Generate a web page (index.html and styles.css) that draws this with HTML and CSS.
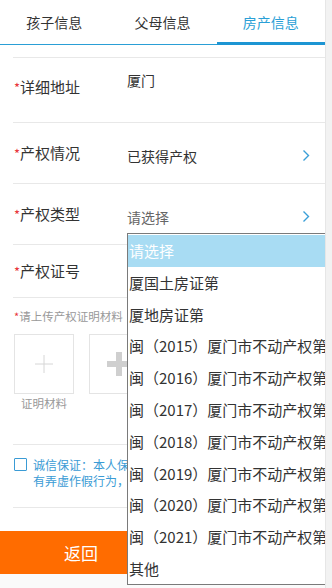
FILE: index.html
```html
<!DOCTYPE html>
<html lang="zh-CN">

<head>
    <meta charset="UTF-8">
    <meta name="viewport" content="width=device-width, initial-scale=1.0">
    <title>房产信息</title>
    <link rel="stylesheet" href="styles.css">
</head>

<body>
    <div class="page">
        <div class="tabs">
            <div class="tab">孩子信息</div>
            <div class="tab">父母信息</div>
            <div class="tab active">房产信息</div>
        </div>

        <div class="form">
            <div class="row tall">
                <div class="label"><span class="req">*</span>详细地址</div>
                <div class="value">厦门</div>
            </div>
            <div class="row">
                <div class="label"><span class="req">*</span>产权情况</div>
                <div class="value">已获得产权</div>
                <svg class="arrow" width="8" height="13" viewBox="0 0 8 13"><polyline points="1.5,1.5 6.5,6.5 1.5,11.5" fill="none" stroke="#3a9fd8" stroke-width="1.4"/></svg>
            </div>
            <div class="row">
                <div class="label"><span class="req">*</span>产权类型</div>
                <div class="value placeholder">请选择</div>
                <svg class="arrow" width="8" height="13" viewBox="0 0 8 13"><polyline points="1.5,1.5 6.5,6.5 1.5,11.5" fill="none" stroke="#3a9fd8" stroke-width="1.4"/></svg>
            </div>
            <div class="row short">
                <div class="label"><span class="req">*</span>产权证号</div>
                <div class="value placeholder"></div>
            </div>

            <div class="upload">
                <div class="hint"><span class="req">*</span>请上传产权证明材料</div>
                <div class="files">
                    <div class="file">
                        <div class="box">
                            <svg width="20" height="20" viewBox="0 0 20 20"><path d="M10 1v18M1 10h18" stroke="#d6d6d6" stroke-width="1"/></svg>
                        </div>
                        <div class="caption">证明材料</div>
                    </div>
                    <div class="file">
                        <div class="box">
                            <svg width="26" height="26" viewBox="0 0 26 26"><path d="M13 1v24M1 13h24" stroke="#cfcfcf" stroke-width="6"/></svg>
                        </div>
                    </div>
                </div>
            </div>

            <div class="promise">
                <span class="check"></span>
                <p>诚信保证：本人保证所填写的以上信息真实准确，如有弄虚作假行为，自愿承担相应责任。</p>
            </div>

            <div class="row code">
                <div class="label">短信验证码</div>
                <div class="value placeholder">请输入</div>
            </div>
        </div>

        <div class="footer">
            <button class="btn back">返回</button>
        </div>

        <ul class="dropdown">
            <li class="selected">请选择</li>
            <li>厦国土房证第</li>
            <li>厦地房证第</li>
            <li>闽（2015）厦门市不动产权第</li>
            <li>闽（2016）厦门市不动产权第</li>
            <li>闽（2017）厦门市不动产权第</li>
            <li>闽（2018）厦门市不动产权第</li>
            <li>闽（2019）厦门市不动产权第</li>
            <li>闽（2020）厦门市不动产权第</li>
            <li>闽（2021）厦门市不动产权第</li>
            <li>其他</li>
        </ul>
    </div>
</body>

</html>
```

FILE: styles.css
```css
body {
    margin: 0;
    background-color: #f2f2f2;
    font-family: "Noto Sans CJK SC", "Microsoft YaHei", sans-serif;
    color: #333;
}

.page {
    position: relative;
    width: 325px;
    height: 588px;
    background-color: #fff;
    border-right: 1px solid #e6e6e6;
    overflow: hidden;
}

.tabs {
    display: flex;
    align-items: flex-start;
    height: 45px;
}

.tab {
    flex: 1;
    height: 44px;
    line-height: 44px;
    text-align: center;
    font-size: 14px;
    border-bottom: 1px solid #2a9fd6;
}

.tab.active {
    height: 42px;
    line-height: 44px;
    color: #2a9fd6;
    border-bottom: 3px solid #1d95d3;
}

.form {
    margin: 12px 0 0 13px;
    border-top: 1px solid #e8e8e8;
}

.row {
    display: flex;
    align-items: center;
    height: 60px;
    padding-left: 1px;
    border-bottom: 1px solid #e8e8e8;
}

.row.tall {
    height: 64px;
    align-items: flex-start;
}

.row.tall .label {
    margin-top: 19px;
}

.row.tall .value {
    margin-top: 12px;
    padding-top: 0;
}

.row.short {
    height: 52px;
}

.row.code .label {
    width: 86px;
}

.label {
    width: 113px;
    font-size: 15px;
    line-height: 20px;
}

.req {
    color: #e8343a;
    font-size: 13px;
}

.value {
    flex: 1;
    font-size: 14px;
    line-height: 20px;
    padding-top: 5px;
}

.placeholder {
    color: #666;
}

.arrow {
    margin: 5px 15px 0 0;
}

.upload {
    padding: 10px 0 33px 1px;
    border-bottom: 1px solid #e8e8e8;
}

.hint {
    font-size: 11.5px;
    line-height: 16px;
    color: #999;
}

.hint .req {
    font-size: 11px;
}

.files {
    display: flex;
    gap: 15px;
    margin-top: 10px;
}

.file {
    width: 60px;
}

.box {
    display: flex;
    align-items: center;
    justify-content: center;
    width: 58px;
    height: 58px;
    border: 1px solid #e4e4e4;
}

.caption {
    margin-top: 1px;
    font-size: 11.5px;
    line-height: 16px;
    color: #999;
    text-align: center;
}

.promise {
    display: flex;
    align-items: flex-start;
    padding: 12px 10px 18px 1px;
    border-bottom: 1px solid #e8e8e8;
}

.check {
    flex: none;
    width: 11px;
    height: 11px;
    margin: 1px 6px 0 0;
    border: 1.5px solid #3a9bd5;
    border-radius: 1px;
}

.promise p {
    margin: 0;
    font-size: 12px;
    line-height: 16px;
    color: #3a9bd5;
}

.footer {
    position: absolute;
    left: 0;
    bottom: 0;
    width: 325px;
    height: 57px;
    background-color: #fafafa;
}

.btn {
    width: 162px;
    height: 43px;
    border: none;
    color: #fff;
    font-family: inherit;
    font-size: 17px;
}

.back {
    background-color: #ff6c00;
}

.dropdown {
    position: absolute;
    left: 127px;
    top: 233px;
    width: 202px;
    height: 349px;
    margin: 0;
    padding: 1px 0 0;
    list-style: none;
    background-color: #fff;
    border: 1px solid #7a7a7a;
    overflow: hidden;
    box-sizing: content-box;
}

.dropdown li {
    height: 31.8px;
    line-height: 31.8px;
    padding-left: 1px;
    font-size: 15px;
    color: #333;
    white-space: nowrap;
}

.dropdown li.selected {
    background-color: #a8dcf3;
    color: #fff;
}
```
